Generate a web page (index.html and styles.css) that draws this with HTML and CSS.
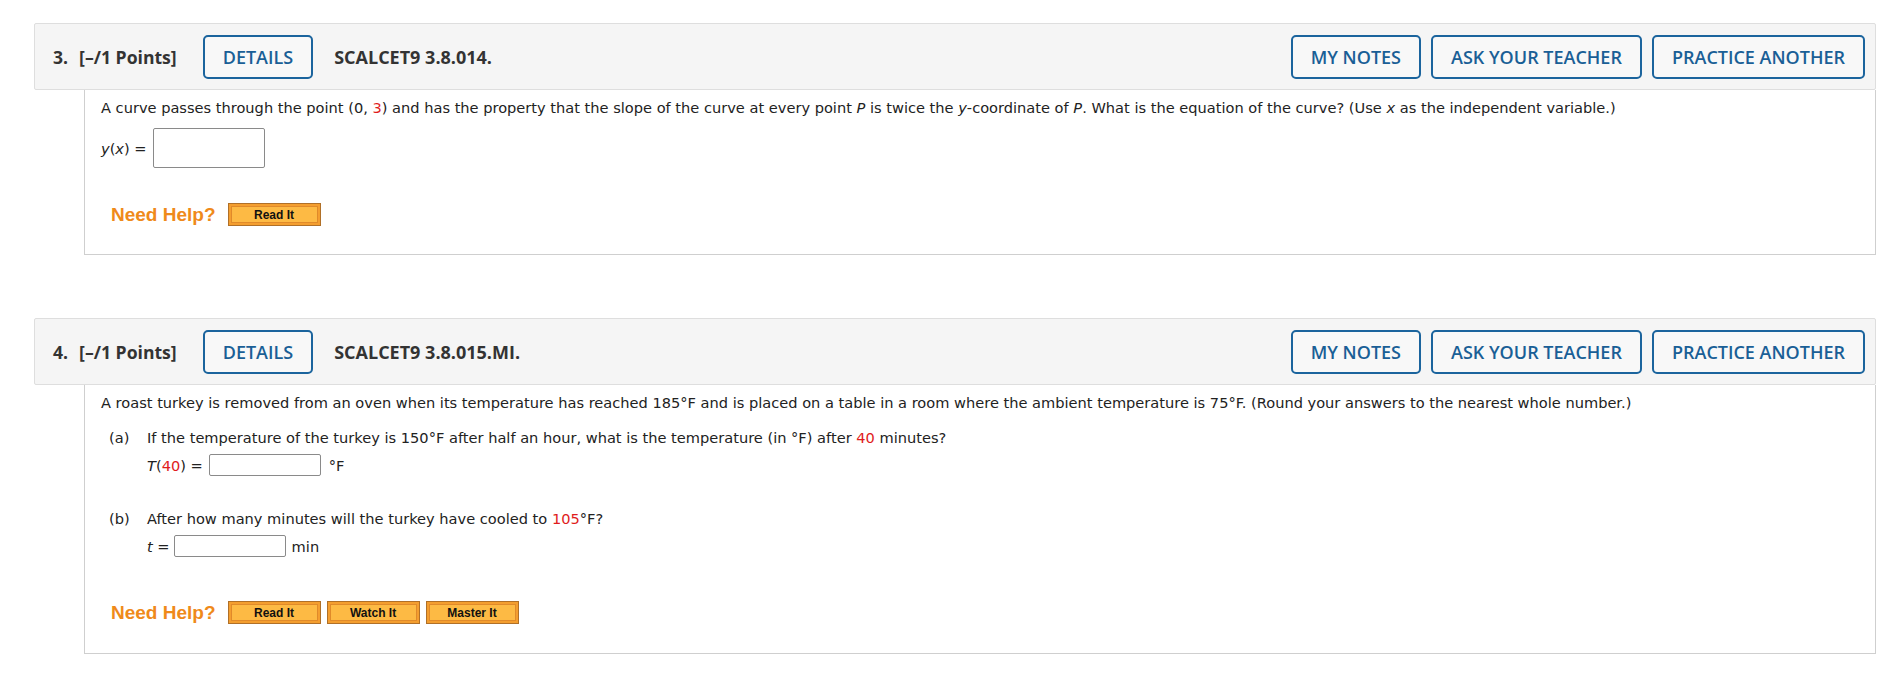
FILE: index.html
```html
<!DOCTYPE html>
<html lang="en">
<head>
<meta charset="utf-8">
<title>Questions</title>
<link rel="stylesheet" href="styles.css">
</head>
<body>
<div class="page">
  <section class="question q3">
    <div class="q-header">
      <span class="q-points"><span class="q-num">3.</span>[–/1 Points]</span>
      <button class="hbtn details">DETAILS</button>
      <span class="q-code">SCALCET9 3.8.014.</span>
      <div class="hactions">
        <button class="hbtn">MY NOTES</button>
        <button class="hbtn">ASK YOUR TEACHER</button>
        <button class="hbtn">PRACTICE ANOTHER</button>
      </div>
    </div>
    <div class="q-body">
      <p class="stem">A curve passes through the point (0, <span class="red">3</span>) and has the property that the slope of the curve at every point <i>P</i> is twice the <i>y</i>-coordinate of <i>P</i>. What is the equation of the curve? (Use <i>x</i> as the independent variable.)</p>
      <div class="answer-row q3-answer">
        <span class="label"><i>y</i>(<i>x</i>) =</span>
        <input class="ans ans-tall" type="text">
      </div>
      <div class="help">
        <span class="need">Need Help?</span>
        <button class="hb"><span>Read It</span></button>
      </div>
    </div>
  </section>

  <section class="question q4">
    <div class="q-header">
      <span class="q-points"><span class="q-num">4.</span>[–/1 Points]</span>
      <button class="hbtn details">DETAILS</button>
      <span class="q-code">SCALCET9 3.8.015.MI.</span>
      <div class="hactions">
        <button class="hbtn">MY NOTES</button>
        <button class="hbtn">ASK YOUR TEACHER</button>
        <button class="hbtn">PRACTICE ANOTHER</button>
      </div>
    </div>
    <div class="q-body">
      <p class="stem">A roast turkey is removed from an oven when its temperature has reached 185°F and is placed on a table in a room where the ambient temperature is 75°F. (Round your answers to the nearest whole number.)</p>
      <div class="part part-a">
        <span class="plabel">(a)</span>
        <div class="pcontent">
          <p class="ptext">If the temperature of the turkey is 150°F after half an hour, what is the temperature (in °F) after <span class="red">40</span> minutes?</p>
          <div class="answer-row">
            <span class="label"><i>T</i>(<span class="red">40</span>) =</span>
            <input class="ans" type="text">
            <span class="unit">°F</span>
          </div>
        </div>
      </div>
      <div class="part part-b">
        <span class="plabel">(b)</span>
        <div class="pcontent">
          <p class="ptext">After how many minutes will the turkey have cooled to <span class="red">105</span>°F?</p>
          <div class="answer-row">
            <span class="label"><i>t</i> =</span>
            <input class="ans" type="text">
            <span class="unit">min</span>
          </div>
        </div>
      </div>
      <div class="help">
        <span class="need">Need Help?</span>
        <button class="hb"><span>Read It</span></button>
        <button class="hb"><span>Watch It</span></button>
        <button class="hb"><span>Master It</span></button>
      </div>
    </div>
  </section>
</div>
</body>
</html>
```
FILE: styles.css
```css
* { box-sizing: border-box; }
html, body { margin: 0; padding: 0; background: #fff; }
.page {
  padding: 23px 18px 0 34px;
}
.question { margin-bottom: 63px; }
.question:last-child { margin-bottom: 0; }

.q-header {
  display: flex;
  align-items: center;
  height: 67px;
  background: #f5f5f5;
  border: 1px solid #dedede;
  border-radius: 2px;
  padding: 0 10px 0 18px;
  font-family: "Open Sans", "DejaVu Sans", sans-serif;
  color: #333;
}
.q-points {
  font-size: 17.6px;
  font-weight: 700;
  white-space: nowrap;
}
.q-num { margin-right: 11px; }
.hbtn {
  font-family: "Open Sans", "DejaVu Sans", sans-serif;
  font-size: 18px;
  font-weight: 600;
  color: #1a5f96;
  background: #f8f8f8;
  border: 2px solid #1b649d;
  border-radius: 5px;
  height: 44px;
  padding: 0 18px;
  margin: 0;
  white-space: nowrap;
  cursor: pointer;
}
.details { margin-left: 26px; }
.q-code {
  margin-left: 21px;
  font-size: 18px;
  font-weight: 700;
  color: #333;
}
.hactions {
  margin-left: auto;
  display: flex;
  gap: 10px;
}

.q-body {
  margin-left: 50px;
  border: 1px solid #cfcfcf;
  border-top: none;
  padding: 8px 16px 28px 16px;
  font-family: "DejaVu Sans", Verdana, sans-serif;
  font-size: 14.6px;
  color: #222;
}
.q-body p { margin: 0; line-height: 19px; }
.red { color: #e01c1c; }

.answer-row {
  display: flex;
  align-items: center;
  gap: 6px;
  white-space: nowrap;
}
.q3-answer { margin-top: 11px; }
.ans {
  width: 112px;
  height: 22px;
  border: 1px solid #8a8a8a;
  border-radius: 2px;
  background: #fff;
  margin: 0;
  padding: 0;
}
.ans-tall { height: 40px; }
.unit { margin-left: 2px; }

.part {
  display: flex;
  padding-left: 8px;
}
.part-a { margin-top: 16px; }
.part-b { margin-top: 33px; }
.part-b .answer-row { gap: 4px; }
.plabel { width: 38px; flex: none; line-height: 19px; }
.q-body p.ptext { margin-bottom: 7px; }

.help {
  display: flex;
  align-items: center;
  padding-left: 10px;
}
.q3 .help { margin-top: 35px; }
.q4 .help { margin-top: 44px; }
.q4 .q-body { padding-bottom: 29px; }
.need {
  font-family: "Liberation Sans", Arial, sans-serif;
  font-weight: 700;
  font-size: 19px;
  color: #ef8a1a;
  margin-right: 12px;
}
.hb {
  width: 93px;
  height: 23px;
  margin: 0 6px 0 0;
  padding: 2px;
  border: 1px solid #b07028;
  background: #f49e2f;
  cursor: pointer;
  display: flex;
}
.hb span {
  flex: 1;
  display: flex;
  align-items: center;
  justify-content: center;
  border: 1px solid #e08a2a;
  background: #fdba44;
  font-family: "Liberation Sans", Arial, sans-serif;
  font-weight: 700;
  font-size: 12px;
  color: #111;
}
```
